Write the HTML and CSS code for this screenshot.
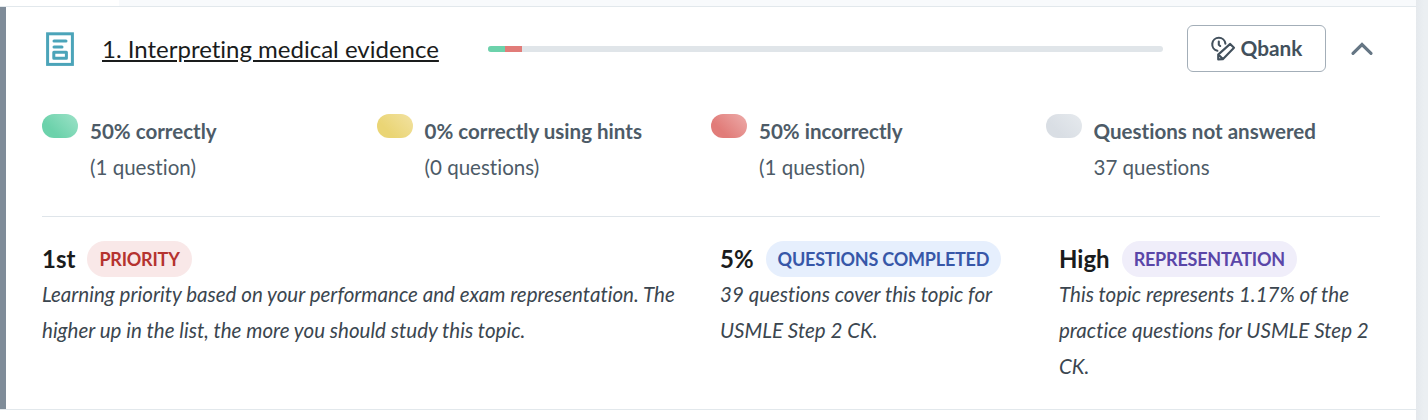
FILE: index.html
```html
<!DOCTYPE html>
<html lang="en">
<head>
  <meta charset="UTF-8" />
  <title>Interpreting medical evidence</title>
  <link rel="stylesheet" href="styles.css">
</head>
<body>
  <div class="page">
    <div class="tabs"><div class="tab-active"></div></div>

    <div class="topic">
      <div class="header">
        <svg class="article-icon" width="28" height="34" viewBox="0 0 28 34" fill="none" stroke="#4ba4b9" stroke-width="3">
          <rect x="1.6" y="1.8" width="24.8" height="30.6" />
          <path d="M8 9h12M8 15h8" stroke-linecap="round" />
          <rect x="7.8" y="20.3" width="12.6" height="6" stroke-linejoin="round" />
        </svg>
        <a class="title">1. Interpreting medical evidence</a>
        <div class="progress">
          <div class="bar-correct" style="width: 2.5%"></div>
          <div class="bar-incorrect" style="width: 2.5%"></div>
        </div>
        <button class="qbank">
          <svg width="26" height="26" viewBox="0 0 26 26" fill="none" stroke="#42505c" stroke-width="2.1" stroke-linecap="round" stroke-linejoin="round">
            <path d="M7.4 15.8A6.6 6.6 0 1 1 15.4 8.6" />
            <path d="M8.8 6.6v3.2l1.4 1.2" />
            <path d="M20.2 8.9l3.8 3.8L12.8 24.2l-4.6.2v-4.8zM8.6 19.6l4.2 4.4" />
          </svg>
          Qbank
        </button>
        <svg class="chevron" width="24" height="16" viewBox="0 0 24 16" fill="none" stroke="#657684" stroke-width="3.2" stroke-linecap="round">
          <path d="M3 12.4l9-8.8 9 8.8" />
        </svg>
      </div>

      <div class="legend">
        <div class="legend-item">
          <span class="pill green"></span>
          <div class="legend-text"><b>50% correctly</b><br>(1 question)</div>
        </div>
        <div class="legend-item">
          <span class="pill yellow"></span>
          <div class="legend-text"><b>0% correctly using hints</b><br>(0 questions)</div>
        </div>
        <div class="legend-item">
          <span class="pill red"></span>
          <div class="legend-text"><b>50% incorrectly</b><br>(1 question)</div>
        </div>
        <div class="legend-item">
          <span class="pill gray"></span>
          <div class="legend-text"><b>Questions not answered</b><br>37 questions</div>
        </div>
      </div>

      <div class="stats">
        <div class="stat">
          <div class="stat-head"><span class="value">1st</span><span class="badge priority">PRIORITY</span></div>
          <p>Learning priority based on your performance and exam representation. The higher up in the list, the more you should study this topic.</p>
        </div>
        <div class="stat">
          <div class="stat-head"><span class="value">5%</span><span class="badge completed">QUESTIONS COMPLETED</span></div>
          <p>39 questions cover this topic for USMLE Step 2 CK.</p>
        </div>
        <div class="stat">
          <div class="stat-head"><span class="value">High</span><span class="badge representation">REPRESENTATION</span></div>
          <p>This topic represents 1.17% of the practice questions for USMLE Step 2 CK.</p>
        </div>
      </div>
    </div>
  </div>
</body>
</html>
```
FILE: styles.css
```css
* {
  box-sizing: border-box;
}
body {
  margin: 0;
  height: 420px;
  overflow: hidden;
  background: linear-gradient(to right, #e5e9ed 1416px, #ebeff2 1424px);
  font-family: Lato, sans-serif;
  font-size: 20.56px;
  font-variant-ligatures: none;
  line-height: 36px;
  color: #4d5b67;
}
.page {
  width: 1416px;
  height: 420px;
  background: #fff;
}
.tabs {
  height: 6px;
  background: #f8fafc;
}
.tab-active {
  width: 119px;
  height: 6px;
  background: #fff;
}
.topic {
  height: 404px;
  padding: 18px 36px 0;
  border: solid #e2e8ec;
  border-width: 1px 0;
  box-shadow: inset 6px 0 #7f8c99;
  padding-left: 42px;
}
.header {
  display: flex;
  align-items: center;
  height: 47px;
}
.article-icon {
  margin-left: 4px;
}
.title {
  width: 337px;
  margin-left: 28px;
  font-size: 24px;
  white-space: nowrap;
  color: #1a1c1c;
  text-decoration: underline;
}
.progress {
  display: flex;
  width: 675px;
  height: 6px;
  margin-left: 49px;
  border-radius: 3px;
  overflow: hidden;
  background: #e0e5e9;
}
.bar-correct {
  background: #6cd2ab;
}
.bar-incorrect {
  background: #e17c79;
}
.qbank {
  display: flex;
  align-items: center;
  justify-content: center;
  gap: 5px;
  width: 139px;
  height: 47px;
  margin-left: 24px;
  padding: 0 1px 2px 0;
  border: 1px solid #a3aeb8;
  border-radius: 6px;
  background: #fff;
  font: bold 20.8px Lato, sans-serif;
  color: #42505c;
}
.chevron {
  margin-left: 24px;
}
.legend {
  display: flex;
  height: 103px;
  margin-top: 42px;
  border-bottom: 1px solid #dfe5ea;
}
.legend-item {
  display: flex;
  gap: 12px;
  width: 25%;
}
.legend-text {
  margin-top: -1px;
}
.pill {
  width: 36px;
  height: 24px;
  border-radius: 12px;
}
.green {
  background: linear-gradient(45deg, #6cd2ab 30%, #9de2c8);
}
.yellow {
  background: linear-gradient(45deg, #ead575 30%, #f2e2a2);
}
.red {
  background: linear-gradient(45deg, #e17c79 30%, #edacaa);
}
.gray {
  background: linear-gradient(45deg, #d9dee4 30%, #e6eaee);
}
.stats {
  display: grid;
  grid-template-columns: 2fr 1fr 1fr;
  margin: 24px -18px 0 0;
}
.stat {
  padding-right: 18px;
}
.stat-head {
  display: flex;
  gap: 12px;
}
.value {
  font-size: 24px;
  font-weight: bold;
  color: #1a1c1c;
}
.badge {
  padding: 0 12px;
  border-radius: 18px;
  font-size: 18px;
  font-weight: bold;
  letter-spacing: -0.22px;
}
.priority {
  background: #f9e8e8;
  color: #b5332f;
}
.completed {
  background: #e6effd;
  color: #3757a8;
}
.representation {
  background: #f0eefa;
  color: #5a46a8;
}
.stat p {
  margin: -1px 0 0;
  font-style: italic;
  color: #3b464f;
}
```
